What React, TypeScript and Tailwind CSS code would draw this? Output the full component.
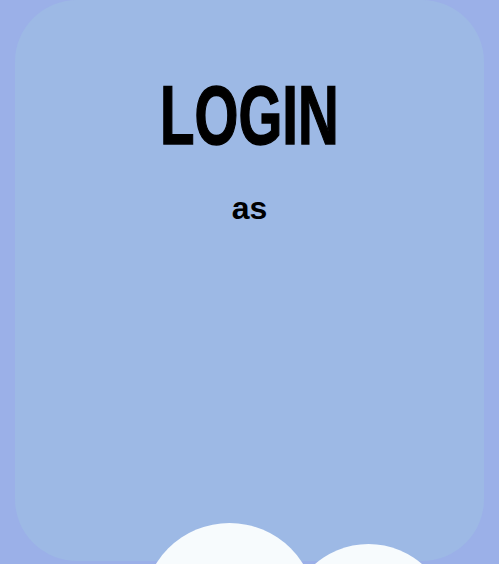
export default function App() {
    return (
        <div className="relative h-[564px] w-[499px] overflow-hidden bg-[#9bb0e8]">
            <div className="mx-[15px] flex h-[561px] flex-col items-center rounded-[62px] bg-[#9db9e5] pt-[74px]">
                <h1 className="[transform:scaleX(0.68)] font-['Liberation_Sans',sans-serif] text-[83px] font-bold leading-none text-black [-webkit-text-stroke:1.5px_black]">
                    LOGIN
                </h1>
                <p className="mt-[35px] font-['Liberation_Sans',sans-serif] text-[32px] font-bold leading-none text-black">
                    as
                </p>
            </div>

            {/* clouds */}
            <div className="absolute left-[143px] top-[523px] h-[173px] w-[173px] rounded-full bg-[#f7fbfd]" />
            <div className="absolute left-[287px] top-[544px] h-[163px] w-[163px] rounded-full bg-[#f7fbfd]" />
        </div>
    )
}
